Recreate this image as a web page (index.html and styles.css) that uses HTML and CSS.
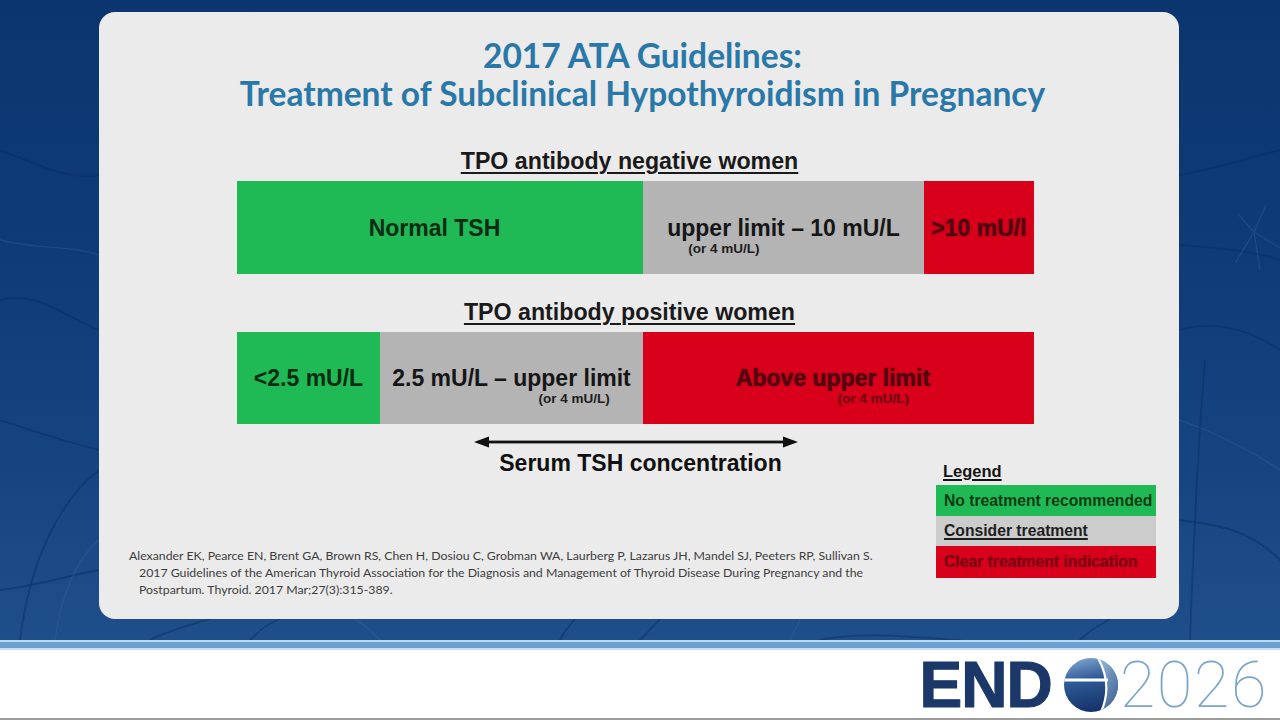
FILE: index.html
```html
<!DOCTYPE html>
<html lang="en">
<head>
<meta charset="utf-8">
<title>2017 ATA Guidelines</title>
<link rel="stylesheet" href="styles.css">
</head>
<body>
<div class="screen">
  <svg class="veins" width="1280" height="640" viewBox="0 0 1280 640" aria-hidden="true">
    <g fill="none" stroke-linecap="round">
      <path class="v-dark" d="M0 150 C30 160 60 180 99 175"/>
      <path class="v-dark" d="M0 300 C40 290 70 320 99 330"/>
      <path class="v-dark" d="M20 640 C30 560 60 500 99 470"/>
      <path class="v-dark" d="M0 590 C40 585 70 575 99 570"/>
      <path class="v-lite" d="M55 640 C60 600 75 560 99 540"/>
      <path class="v-dark" d="M0 420 C30 430 60 440 99 450"/>
      <path class="v-lite" d="M0 240 C40 250 70 245 99 255"/>
      <path class="v-dark" d="M1179 175 C1210 170 1240 160 1280 150"/>
      <path class="v-dark" d="M1179 245 C1215 248 1250 250 1280 260"/>
      <path class="v-lite" d="M1254 232 L1236 262 M1254 232 L1266 205 M1254 232 L1280 248 M1254 232 L1238 214 M1254 232 L1260 270"/>
      <path class="v-dark" d="M1179 330 C1215 320 1250 330 1280 350"/>
      <path class="v-dark" d="M1205 360 C1200 420 1195 500 1190 640"/>
      <path class="v-lite" d="M1179 420 C1210 430 1250 450 1280 470"/>
      <path class="v-dark" d="M1179 520 C1220 525 1250 530 1280 560"/>
      <path class="v-dark" d="M150 640 C170 630 190 625 210 619"/>
      <path class="v-dark" d="M250 640 C260 630 270 622 280 619"/>
      <path class="v-lite" d="M380 640 C370 630 360 622 355 619"/>
      <path class="v-dark" d="M560 640 C565 630 570 625 575 619"/>
      <path class="v-dark" d="M640 640 C650 630 655 625 660 619"/>
      <path class="v-lite" d="M790 640 C795 630 798 625 800 619"/>
      <path class="v-dark" d="M820 640 C860 632 900 636 960 640"/>
      <path class="v-dark" d="M1080 640 C1090 630 1100 625 1110 619"/>
    </g>
  </svg>

  <section class="panel">
    <h1 class="title">2017 ATA Guidelines:<br>Treatment of Subclinical Hypothyroidism in Pregnancy</h1>

    <div class="chart">
      <h2 class="group-title">TPO antibody negative women</h2>
      <div class="bar bar-tall">
        <div class="seg green shift-left" style="flex-basis:406px"><span class="main">Normal TSH</span></div>
        <div class="seg grey with-sub" style="flex-basis:281px">
          <div class="label">
            <span class="main">upper limit – 10 mU/L</span>
            <span class="sub sub-left">(or 4 mU/L)</span>
          </div>
        </div>
        <div class="seg red" style="flex-basis:110px"><span class="main main-red">&gt;10 mU/l</span></div>
      </div>

      <h2 class="group-title second">TPO antibody positive women</h2>
      <div class="bar">
        <div class="seg green" style="flex-basis:143px"><span class="main">&lt;2.5 mU/L</span></div>
        <div class="seg grey with-sub" style="flex-basis:263px">
          <div class="label">
            <span class="main">2.5 mU/L – upper limit</span>
            <span class="sub sub-right">(or 4 mU/L)</span>
          </div>
        </div>
        <div class="seg red with-sub shift-left" style="flex-basis:391px">
          <div class="label">
            <span class="main main-red">Above upper limit</span>
            <span class="sub sub-right sub-red">(or 4 mU/L)</span>
          </div>
        </div>
      </div>

      <div class="arrow">
        <svg width="324" height="12" viewBox="0 0 324 12" aria-hidden="true">
          <rect x="10" y="4.6" width="304" height="2.8" fill="#111"/>
          <polygon points="0,6 15,0.5 15,11.5" fill="#111"/>
          <polygon points="324,6 309,0.5 309,11.5" fill="#111"/>
        </svg>
      </div>
    </div>

    <div class="lower">
      <div class="lower-left">
        <div class="axis-label">Serum TSH concentration</div>
        <p class="citation">Alexander EK, Pearce EN, Brent GA, Brown RS, Chen H, Dosiou C, Grobman WA, Laurberg P, Lazarus JH, Mandel SJ, Peeters RP, Sullivan S.<br>2017 Guidelines of the American Thyroid Association for the Diagnosis and Management of Thyroid Disease During Pregnancy and the<br>Postpartum. Thyroid. 2017 Mar;27(3):315-389.</p>
      </div>
      <div class="legend">
        <div class="legend-title">Legend</div>
        <div class="legend-item li-green">No treatment recommended</div>
        <div class="legend-item li-grey"><span class="u">Consider treatment</span></div>
        <div class="legend-item li-red">Clear treatment indication</div>
      </div>
    </div>
  </section>
</div>

<div class="band"></div>

<footer class="footer">
  <div class="logo">
    <span class="logo-end">END</span>
    <svg class="globe" width="54" height="54" viewBox="0 0 54 54" aria-hidden="true">
      <defs>
        <linearGradient id="gfill" x1="0.2" y1="0" x2="0.4" y2="1">
          <stop offset="0" stop-color="#7fa6d1"/>
          <stop offset="0.42" stop-color="#2f5b96"/>
          <stop offset="1" stop-color="#16336a"/>
        </linearGradient>
        <linearGradient id="gright" x1="0" y1="0" x2="1" y2="1">
          <stop offset="0" stop-color="#a9c4e2"/>
          <stop offset="1" stop-color="#2d5590"/>
        </linearGradient>
        <clipPath id="gclip"><circle cx="27" cy="27" r="27"/></clipPath>
      </defs>
      <circle cx="27" cy="27" r="27" fill="url(#gfill)"/>
      <g clip-path="url(#gclip)">
        <path d="M34 0 Q49 27 37 54 L60 54 L60 0 Z" fill="url(#gright)" opacity="0.85"/>
        <rect x="-2" y="20.5" width="46" height="3" fill="#ffffff"/>
        <path d="M34 0 Q49 27 37 54" fill="none" stroke="#ffffff" stroke-width="2.2"/>
      </g>
    </svg>
    <span class="logo-year">2026</span>
  </div>
</footer>
</body>
</html>
```

FILE: styles.css
```css
* { box-sizing: border-box; }

html, body {
  margin: 0;
  padding: 0;
  width: 1280px;
  height: 720px;
  overflow: hidden;
  background: #ffffff;
}

.screen {
  position: relative;
  width: 1280px;
  height: 640px;
  padding-top: 12px;
  background: linear-gradient(180deg, #0b356f 0%, #0f3c77 40%, #174582 75%, #1f4f8b 100%);
  overflow: hidden;
}

.veins {
  position: absolute;
  left: 0;
  top: 0;
}

.v-dark { stroke: #0a2d62; stroke-width: 1.8; opacity: 0.5; }
.v-lite { stroke: #3a66a0; stroke-width: 1.3; opacity: 0.35; }

.panel {
  position: relative;
  width: 1080px;
  height: 607px;
  margin-left: 99px;
  padding: 24px 23px 0 30px;
  background: #ebebeb;
  border-radius: 16px;
}

.title {
  margin: 0;
  font-family: "Lato", "Open Sans", sans-serif;
  font-weight: 700;
  font-size: 33.5px;
  line-height: 38px;
  color: #2a78a7;
  text-align: center;
}

.chart {
  width: 797px;
  margin-left: 108px;
}

.group-title {
  margin: 36px 0 7px;
  padding-right: 12px;
  font-family: "Liberation Sans", Arial, sans-serif;
  font-weight: 700;
  font-size: 23.2px;
  line-height: 26px;
  color: #1a1a1a;
  text-align: center;
  text-decoration: underline;
  text-decoration-thickness: 1.5px;
  text-underline-offset: 3px;
}

.group-title.second { margin-top: 25px; }

.bar {
  display: flex;
  height: 92px;
}

.bar-tall { height: 93px; }

.seg {
  flex-grow: 0;
  flex-shrink: 0;
  display: flex;
  align-items: center;
  justify-content: center;
  font-family: "Liberation Sans", Arial, sans-serif;
  font-weight: 700;
}

.seg.with-sub { padding-top: 16px; }
.seg.shift-left { padding-right: 11px; }

.green { background: #1fba55; }
.grey { background: #b4b4b4; }
.red { background: #d8001a; }

.label {
  display: flex;
  flex-direction: column;
}

.main {
  font-size: 23px;
  line-height: 26px;
  color: #161616;
  white-space: nowrap;
}

.green .main { color: #0c2b13; }

.main-red {
  color: #4e0610;
  text-shadow: 0 0 1.5px rgba(80, 6, 14, 0.8);
}

.sub {
  font-size: 13.5px;
  line-height: 16px;
  color: #1c1c1c;
  white-space: nowrap;
}

.sub-left { padding-left: 21px; text-align: left; }
.sub-right { padding-right: 21px; text-align: right; }

.sub-red {
  color: #7a0812;
  text-shadow: 0 0 1px rgba(120, 8, 18, 0.7);
}

.arrow {
  width: 324px;
  height: 12px;
  margin: 12px auto 0;
}

.arrow svg { display: block; }

.lower {
  display: grid;
  grid-template-columns: 1fr 220px;
  margin-top: 2px;
}

.axis-label {
  padding-left: 216px;
  font-family: "Liberation Sans", Arial, sans-serif;
  font-weight: 700;
  font-size: 23px;
  line-height: 26px;
  color: #111111;
  text-align: center;
}

.citation {
  margin: 71px 0 0;
  padding-left: 10px;
  text-indent: -10px;
  font-family: "Lato", "Open Sans", sans-serif;
  font-size: 12.3px;
  line-height: 17px;
  color: #3d3d3d;
  white-space: nowrap;
}

.legend {
  padding-top: 11px;
  font-family: "Liberation Sans", Arial, sans-serif;
  font-weight: 700;
}

.legend-title {
  padding-left: 7px;
  margin-bottom: 4px;
  font-size: 16.5px;
  line-height: 20px;
  color: #151515;
  text-decoration: underline;
  text-decoration-thickness: 1.5px;
  text-underline-offset: 2px;
}

.legend-item {
  display: flex;
  align-items: center;
  padding-left: 8px;
  font-size: 15.7px;
  white-space: nowrap;
}

.li-green { height: 31px; background: #1fba55; color: #0b3a15; }
.li-grey { height: 30px; background: #cccccc; color: #1e1e1e; }
.li-red {
  height: 32px;
  background: #d8001a;
  color: #7c0414;
  text-shadow: 0 0 1px rgba(110, 4, 18, 0.6);
}

.u {
  text-decoration: underline;
  text-decoration-thickness: 1.5px;
  text-underline-offset: 2px;
}

.band {
  height: 10px;
  background: linear-gradient(180deg, #b8def2 0px, #b8def2 2px, #6f9fce 2px, #6f9fce 8px, #c9def0 8px, #c9def0 10px);
}

.footer {
  height: 70px;
  display: flex;
  justify-content: flex-end;
  align-items: flex-start;
  padding: 8px 12px 0 0;
  background: #ffffff;
  border-bottom: 2px solid #9c9c9c;
}

.logo {
  display: flex;
  align-items: center;
  height: 54px;
}

.logo-end {
  font-family: "Liberation Sans", Arial, sans-serif;
  font-weight: 700;
  font-size: 64px;
  line-height: 1;
  letter-spacing: -1px;
  color: #1c3869;
  -webkit-text-stroke: 1.2px #1c3869;
}

.globe {
  display: block;
  margin-left: 12px;
}

.logo-year {
  margin-left: 2px;
  font-family: "Roboto", "Liberation Sans", sans-serif;
  font-weight: 100;
  font-size: 65px;
  line-height: 1;
  letter-spacing: 1.5px;
  color: #7ca5cb;
}
```
